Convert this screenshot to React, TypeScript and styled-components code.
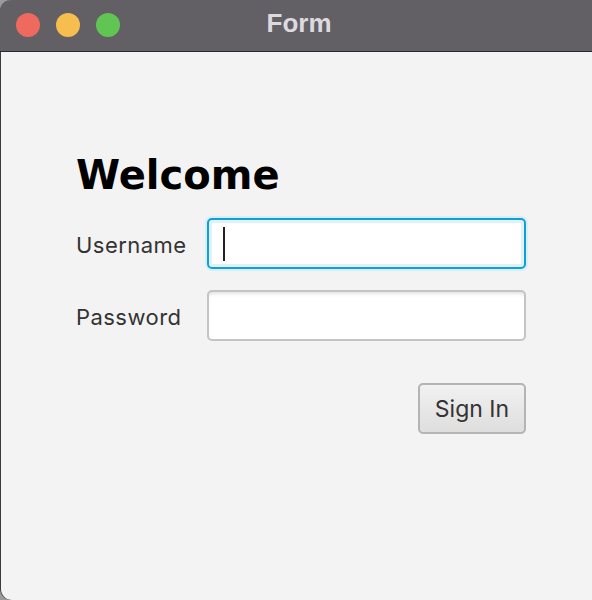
import React from "react";
import styled, { createGlobalStyle } from "styled-components";

const Global = createGlobalStyle`
  html, body { margin: 0; padding: 0; background: #9a9a9a; }
  body { width: 592px; height: 600px; overflow: hidden; }
`;

const Window = styled.div`
  width: 610px;
  height: 600px;
  border-radius: 11px;
  overflow: hidden;
  background: #f3f3f3;
  display: flex;
  flex-direction: column;
  box-shadow: inset 1px 0 0 #3a3a3a;
`;

const TitleBar = styled.div`
  height: 52px;
  flex: none;
  background: #626065;
  border-bottom: 1px solid #2a2a2a;
  display: flex;
  align-items: center;
  padding-left: 16px;
  position: relative;
  box-sizing: border-box;
`;

const Light = styled.span<{ $c: string }>`
  width: 24px;
  height: 24px;
  border-radius: 50%;
  background: ${(p) => p.$c};
  margin-right: 16px;
  margin-top: -2px;
`;

const Title = styled.div`
  position: absolute;
  left: 0;
  width: 592px;
  top: 0;
  bottom: 4px;
  display: flex;
  align-items: center;
  justify-content: center;
  padding-left: 6px;
  box-sizing: border-box;
  font-family: "Liberation Sans", Arial, sans-serif;
  font-weight: 700;
  font-size: 26px;
  color: #dcdadf;
`;

const Content = styled.div`
  flex: 1;
  padding: 99px 0 0 76px;
  display: flex;
  flex-direction: column;
`;

const Heading = styled.h1`
  margin: 0;
  font-family: "DejaVu Sans", Verdana, sans-serif;
  font-weight: 700;
  font-size: 40px;
  line-height: 48px;
  color: #000;
`;

const FormGrid = styled.div`
  margin-top: 19px;
  display: grid;
  grid-template-columns: 131px 319px;
  row-gap: 21px;
  align-items: center;
`;

const Label = styled.label`
  font-family: Inter, "Liberation Sans", sans-serif;
  font-size: 22px;
  color: #333;
  letter-spacing: 0.45px;
  margin-top: 2px;
`;

const Field = styled.div<{ $focused?: boolean }>`
  height: 51px;
  box-sizing: border-box;
  border-radius: 5px;
  background: #fff;
  display: flex;
  align-items: center;
  padding-left: 14px;
  border: ${(p) => (p.$focused ? "2px solid #0aa2d8" : "2px solid #c4c4c4")};
  box-shadow: ${(p) =>
    p.$focused
      ? "0 0 0 2px #dbeef7, inset 0 0 0 3px #e2f1f8, inset 0 4px 3px -2px #d8e8f0"
      : "inset 0 4px 4px -3px #d6d6d6"};
`;

const Caret = styled.span`
  width: 2px;
  height: 34px;
  background: #222;
`;

const ButtonRow = styled.div`
  width: 450px;
  margin-top: 42px;
  display: flex;
  justify-content: flex-end;
`;

const Button = styled.button`
  width: 108px;
  height: 51px;
  box-sizing: border-box;
  border: 2px solid #b4b4b4;
  border-radius: 5px;
  background: linear-gradient(#f1f1f1, #dedede);
  font-family: Inter, "Liberation Sans", sans-serif;
  font-size: 23px;
  color: #333;
  padding: 0;
`;

export default function App() {
  return (
    <>
      <Global />
      <Window>
        <TitleBar>
          <Light $c="#ee6a5f" />
          <Light $c="#f5be4f" />
          <Light $c="#61c554" />
          <Title>Form</Title>
        </TitleBar>
        <Content>
          <Heading>Welcome</Heading>
          <FormGrid>
            <Label>Username</Label>
            <Field $focused>
              <Caret />
            </Field>
            <Label>Password</Label>
            <Field />
          </FormGrid>
          <ButtonRow>
            <Button>Sign In</Button>
          </ButtonRow>
        </Content>
      </Window>
    </>
  );
}
